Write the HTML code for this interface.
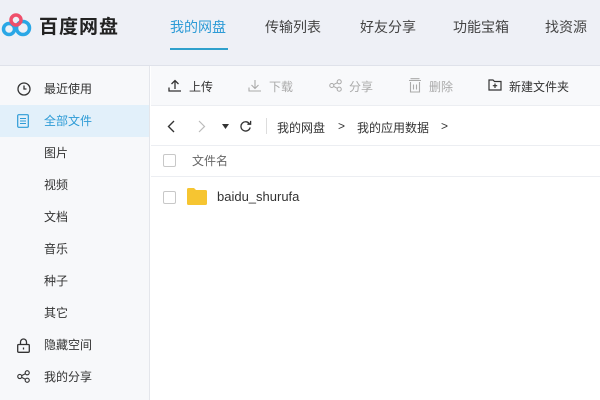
<!DOCTYPE html>
<html><head><meta charset="utf-8"><style>
*{margin:0;padding:0;box-sizing:border-box}
body{width:600px;height:400px;overflow:hidden;background:#fff;font-family:"Liberation Sans","Noto Sans CJK SC",sans-serif;position:relative;color:#333}
.hdr{position:absolute;left:0;top:0;width:600px;height:66px;background:#eef0f6;border-bottom:1px solid #dfe2ea}
.logo{position:absolute;left:39px;top:12px;font-size:19px;font-weight:bold;color:#222;letter-spacing:1px}
.nav{position:absolute;top:17px;font-size:14px;color:#444}
.ul{position:absolute;left:170px;top:48px;width:58px;height:2px;background:#2fa0cc}
.side{position:absolute;left:0;top:66px;width:150px;height:334px;background:#f7f8fa;border-right:1px solid #e4e6eb}
.it{position:absolute;left:0;width:149px;height:32px;font-size:12px;line-height:32px;padding-left:44px;color:#333}
.act{background:#e2f0fa;color:#2d9bd6}
.tb{position:absolute;left:151px;top:66px;width:449px;height:40px;background:#f8f9fb;border-bottom:1px solid #eceef2}
.t{position:absolute;top:12px;font-size:12px;color:#333}
.g{color:#aaa}
.bc{position:absolute;left:151px;top:106px;width:449px;height:40px;border-bottom:1px solid #eceef2;font-size:12px}
.cb{position:absolute;width:13px;height:13px;border:1px solid #c8c8c8;border-radius:2px;background:#fff}
svg{position:absolute}
</style></head><body>
<div class="hdr">
<svg style="left:1px;top:12px" width="34" height="26" viewBox="0 0 34 26"><circle cx="8" cy="17" r="5.5" fill="none" stroke="#2aa7e6" stroke-width="3.5"/><circle cx="22" cy="16" r="6.5" fill="none" stroke="#2aa7e6" stroke-width="3.5"/><circle cx="15" cy="8" r="5" fill="none" stroke="#ef4f6b" stroke-width="3.5"/></svg>
<div class="logo">百度网盘</div>
<div class="nav" style="left:170px;color:#2d9bd6">我的网盘</div>
<div class="nav" style="left:265px">传输列表</div>
<div class="nav" style="left:360px">好友分享</div>
<div class="nav" style="left:453px">功能宝箱</div>
<div class="nav" style="left:545px">找资源</div>
<div class="ul"></div>
</div>
<div class="side">
<div class="it" style="top:7px">最近使用</div>
<div class="it act" style="top:39px">全部文件</div>
<div class="it" style="top:71px">图片</div>
<div class="it" style="top:103px">视频</div>
<div class="it" style="top:135px">文档</div>
<div class="it" style="top:167px">音乐</div>
<div class="it" style="top:199px">种子</div>
<div class="it" style="top:231px">其它</div>
<div class="it" style="top:263px">隐藏空间</div>
<div class="it" style="top:295px">我的分享</div>
<svg style="left:17px;top:16px" width="14" height="14" viewBox="0 0 14 14"><circle cx="7" cy="7" r="6" fill="none" stroke="#333" stroke-width="1.3"/><path d="M7 3.5V7H9.5" fill="none" stroke="#333" stroke-width="1.3"/></svg>
<svg style="left:17px;top:48px" width="12" height="14" viewBox="0 0 12 14"><rect x="0.7" y="0.7" width="10.6" height="12.6" rx="1" fill="none" stroke="#2d9bd6" stroke-width="1.2"/><path d="M3 4.5H9M3 7H9M3 9.5H9" stroke="#2d9bd6" stroke-width="1.1"/></svg>
<svg style="left:17px;top:272px" width="13" height="15" viewBox="0 0 13 15"><path d="M3.5 6.5V4a3 3 0 0 1 6 0v2.5" fill="none" stroke="#333" stroke-width="1.3"/><rect x="0.7" y="6.5" width="11.6" height="7.8" rx="1" fill="none" stroke="#333" stroke-width="1.3"/><path d="M6.5 9.5v2" stroke="#333" stroke-width="1.3"/></svg>
<svg style="left:17px;top:304px" width="13" height="13" viewBox="0 0 14 14"><circle cx="3" cy="7" r="2.2" fill="none" stroke="#333" stroke-width="1.2"/><circle cx="11" cy="3" r="2.2" fill="none" stroke="#333" stroke-width="1.2"/><circle cx="11" cy="11" r="2.2" fill="none" stroke="#333" stroke-width="1.2"/><path d="M5 6L9 4M5 8L9 10" stroke="#333" stroke-width="1.2"/></svg>
</div>
<div class="tb">
<svg style="left:17px;top:13px" width="14" height="13" viewBox="0 0 14 13"><path d="M7 10V1.5M3.5 5L7 1.5 10.5 5M1 8.5v3.5h12" fill="none" stroke="#333" stroke-width="1.3"/></svg>
<div class="t" style="left:38px">上传</div>
<svg style="left:97px;top:13px" width="14" height="13" viewBox="0 0 14 13"><path d="M7 1v8.5M3.5 6L7 9.5 10.5 6M1 8.5v3.5h12" fill="none" stroke="#aaa" stroke-width="1.1"/></svg>
<div class="t g" style="left:118px">下载</div>
<svg style="left:178px;top:13px" width="13" height="13" viewBox="0 0 14 14"><circle cx="3" cy="7" r="2.2" fill="none" stroke="#aaa" stroke-width="1.1"/><circle cx="11" cy="3" r="2.2" fill="none" stroke="#aaa" stroke-width="1.1"/><circle cx="11" cy="11" r="2.2" fill="none" stroke="#aaa" stroke-width="1.1"/><path d="M5 6L9 4M5 8L9 10" stroke="#aaa" stroke-width="1.1"/></svg>
<div class="t g" style="left:198px">分享</div>
<svg style="left:258px;top:12px" width="12" height="15" viewBox="0 0 12 15"><path d="M0 2.5H12M1.5 0.7H10.5M1.5 4V14H10.5V4M4.5 6.5v5M7.5 6.5v5" fill="none" stroke="#aaa" stroke-width="1.1"/></svg>
<div class="t g" style="left:278px">删除</div>
<svg style="left:337px;top:13px" width="14" height="12" viewBox="0 0 14 12"><path d="M1 1h4l1.5 1.5H13V11H1z" fill="none" stroke="#333" stroke-width="1.2"/><path d="M7 4.5v4.5M4.8 6.7h4.4" stroke="#333" stroke-width="1.2"/></svg>
<div class="t" style="left:358px">新建文件夹</div>
</div>
<div class="bc">
<svg style="left:16px;top:14px" width="8" height="13" viewBox="0 0 8 13"><path d="M7 1L1.5 6.5 7 12" fill="none" stroke="#333" stroke-width="1.4"/></svg>
<svg style="left:47px;top:14px" width="8" height="13" viewBox="0 0 8 13"><path d="M1 1l5.5 5.5L1 12" fill="none" stroke="#bbb" stroke-width="1.2"/></svg>
<svg style="left:71px;top:18px" width="7" height="5" viewBox="0 0 7 5"><path d="M0 0h7L3.5 5z" fill="#333"/></svg>
<svg style="left:88px;top:14px" width="13" height="13" viewBox="0 0 14 14"><path d="M11.5 4.5A5 5 0 1 0 12 8" fill="none" stroke="#333" stroke-width="1.4"/><path d="M9 4.5h3.5V1" fill="none" stroke="#333" stroke-width="1.4"/></svg>
<div style="position:absolute;left:115px;top:12px;width:1px;height:16px;background:#ddd"></div>
<div style="position:absolute;left:126px;top:13px">我的网盘</div>
<div style="position:absolute;left:187px;top:13px">&gt;</div>
<div style="position:absolute;left:206px;top:13px">我的应用数据</div>
<div style="position:absolute;left:290px;top:13px">&gt;</div>
</div>
<div class="cb" style="left:163px;top:154px"></div>
<div style="position:absolute;left:192px;top:152px;font-size:12px;color:#666">文件名</div>
<div style="position:absolute;left:151px;top:176px;width:449px;height:1px;background:#eceef2"></div>
<div class="cb" style="left:163px;top:191px"></div>
<svg style="left:187px;top:188px" width="20" height="17" viewBox="0 0 20 17"><path d="M0 1.5A1.5 1.5 0 0 1 1.5 0H7l2 2h9.5A1.5 1.5 0 0 1 20 3.5V15.5A1.5 1.5 0 0 1 18.5 17H1.5A1.5 1.5 0 0 1 0 15.5z" fill="#f6c531"/></svg>
<div style="position:absolute;left:217px;top:189px;font-size:13px;color:#333">baidu_shurufa</div>
</body></html>
